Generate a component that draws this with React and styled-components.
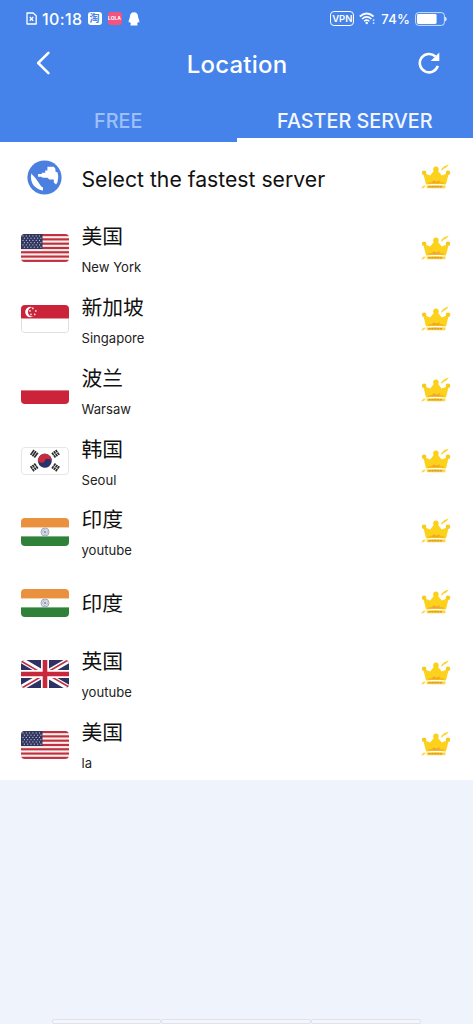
import React from "react";
import styled, { createGlobalStyle } from "styled-components";

const servers = [
  { flag: "us", name: "美国", city: "New York" },
  { flag: "sg", name: "新加坡", city: "Singapore" },
  { flag: "pl", name: "波兰", city: "Warsaw" },
  { flag: "kr", name: "韩国", city: "Seoul" },
  { flag: "in", name: "印度", city: "youtube" },
  { flag: "in", name: "印度" },
  { flag: "gb", name: "英国", city: "youtube" },
  { flag: "us", name: "美国", city: "la" },
];

const UsFlag = () => (
  <>
    <rect width="48" height="28" fill="#f6efec" />
    {[0, 1, 2, 3, 4, 5, 6].map((i) => (
      <rect key={i} y={i * 4.3} width="48" height="2.15" fill="#c0303f" />
    ))}
    <rect width="21.5" height="15" fill="#30365f" />
    {[0, 1, 2, 3, 4, 5].map((r) =>
      [0, 1, 2, 3, 4, 5].map((c) => (
        <circle
          key={`${r}-${c}`}
          cx={2 + c * 3.3 + (r % 2) * 1.4}
          cy={1.9 + r * 2.25}
          r="0.65"
          fill="#b9bccd"
        />
      ))
    )}
  </>
);

const SgFlag = () => (
  <>
    <rect width="48" height="28" fill="#fff" />
    <rect width="48" height="13.5" fill="#cb2339" />
    <circle cx="9.4" cy="7" r="5.2" fill="#fff" />
    <circle cx="11.6" cy="7" r="4.7" fill="#cb2339" />
    {[
      [11.8, 3.4],
      [9, 5.9],
      [14.8, 5.9],
      [10, 9.4],
      [13.7, 9.4],
    ].map(([x, y]) => (
      <circle key={`${x}-${y}`} cx={x} cy={y} r="0.9" fill="#f8dfe2" />
    ))}
    <path d="M.4 13.5V24.6Q.4 27.6 3.4 27.6H44.6Q47.6 27.6 47.6 24.6V13.5" fill="none" stroke="#d5d0d2" strokeWidth="0.8" />
  </>
);

const PlFlag = () => (
  <>
    <rect width="48" height="28" fill="#fff" />
    <rect y="14.4" width="48" height="13.6" fill="#cb2339" />
  </>
);

const Trigram = ({ x, y, angle, broken }) => (
  <g transform={`translate(${x} ${y}) rotate(${angle})`} stroke="#2c2c2e" strokeWidth="1.7">
    <path d="M-3 -2.3H3M-3 0H3M-3 2.3H3" />
    {broken && <path d="M0 -3.2V3.2" stroke="#fff" strokeWidth="0.5" />}
  </g>
);

const KrFlag = () => (
  <>
    <rect width="48" height="28" fill="#fff" />
    <g transform="rotate(8 23.8 13.8)">
      <circle cx="23.8" cy="13.8" r="7" fill="#29346f" />
      <path d="M16.8 13.8a7 7 0 0 1 14 0a3.5 2.4 0 0 0-7 0a3.5 2.4 0 0 1-7 0z" fill="#c92c3d" />
    </g>
    <Trigram x={13.2} y={6.8} angle={-54} />
    <Trigram x={34.6} y={6.8} angle={54} broken />
    <Trigram x={13.2} y={20.4} angle={54} broken />
    <Trigram x={34.6} y={20.4} angle={-54} broken />
    <rect x="0.4" y="0.4" width="47.2" height="27.2" rx="3.6" fill="none" stroke="#dcdcde" strokeWidth="0.8" />
  </>
);

const InFlag = () => (
  <>
    <rect width="48" height="28" fill="#fdfdfb" />
    <rect width="48" height="9.4" fill="#e9913f" />
    <rect y="18.4" width="48" height="9.6" fill="#2f8039" />
    <circle cx="24" cy="14" r="4" fill="#eef0f4" stroke="#999fb3" strokeWidth="0.9" />
    <circle cx="24" cy="14" r="2.4" fill="none" stroke="#a0a6bb" strokeWidth="1.5" strokeDasharray="0.6 0.6" />
    <circle cx="24" cy="14" r="1.1" fill="#7c86a8" />
  </>
);

const GbFlag = () => (
  <>
    <rect width="48" height="28" fill="#2c3264" />
    <path d="M0 0L48 28M48 0L0 28" stroke="#fff" strokeWidth="5.4" />
    <path d="M-1 0.4L23 14.4M49 27.6L25 13.6M48.8 -1L25 13M-0.8 29L23 15" stroke="#c0303f" strokeWidth="1.6" />
    <path d="M24 0V28M0 14H48" stroke="#fff" strokeWidth="8" />
    <path d="M24 0V28M0 14H48" stroke="#c8283b" strokeWidth="4.6" />
  </>
);

const flags = { us: UsFlag, sg: SgFlag, pl: PlFlag, kr: KrFlag, in: InFlag, gb: GbFlag };

const Crown = () => (
  <svg width="32" height="28" viewBox="0 0 32 28">
    <path
      d="M6.8 19.4L4.6 10.4L10.6 12.6L15.9 6L21.3 12.6L27.4 10.4L25.2 19.4Q16 18 6.8 19.4Z"
      fill="#fcd21c"
      stroke="#fcd21c"
      strokeWidth="2"
      strokeLinejoin="round"
    />
    <circle cx="15.9" cy="5.2" r="2.7" fill="#fbd019" />
    <circle cx="4.1" cy="8.8" r="2.3" fill="#f8ca20" />
    <circle cx="28" cy="8.8" r="2.3" fill="#f8ca20" />
    <path d="M8 18.6Q16 16.4 24.4 18.6L23.8 20H8.2Z" fill="#f6bb1c" />
    <path d="M11 18.8L14 16.2L16.4 18L20 16L18.8 19Z" fill="#f4a32c" />
    <path d="M6.6 21.4Q16 20.6 25.6 21.6L25.2 24.2H6.8Z" fill="#fbd545" />
    <path d="M8.4 22.7H22" stroke="#dc9c24" strokeWidth="1.6" strokeDasharray="2.4 0.5" />
    <path d="M1 24.4L3.2 21.8L6 21.4L4 24Z" fill="#fbd94b" />
    <path d="M21.3 5L24.6 1.9L28.8 0.5L26.6 3.2L23.4 4.9L21.6 7Z" fill="#fbd42c" />
  </svg>
);

const Globe = () => (
  <svg width="35" height="35" viewBox="0 0 35 35">
    <circle cx="17.5" cy="17.5" r="17.1" fill="#4b7fe0" />
    <path
      d="M4.2 13.4L8.4 18L11.2 22L14.2 26.4L16 27.6V30.4Q10.4 29.8 6.5 25.2Q3 20 4.2 13.4Z"
      fill="#fff"
    />
    <path
      d="M20.4 6.8H26.8L28.4 8.8V11.4L30.6 12.6Q32.2 17.4 30.4 22.6L29 24.6L26.8 22.6V19.4H22.4L20.4 17.8H15.8L14.2 16.8H11V14H14.8V12.8H18.2V10.4H20.4Z"
      fill="#fff"
    />
  </svg>
);

const App = () => (
  <Screen>
    <GlobalStyle />
    <Header>
      <StatusBar>
        <StatusGroup>
          <svg width="11" height="13" viewBox="0 0 11 13" fill="none" stroke="#fff">
            <path d="M1 1H7.2L10.2 3.8V12H1Z" strokeWidth="1.3" strokeLinejoin="round" />
            <path d="M3.8 5L7.2 8.8M7.2 5L3.8 8.8" strokeWidth="1.3" />
          </svg>
          <Clock>10:18</Clock>
          <AppBadge>淘</AppBadge>
          <AppBadge $pink>LOLA</AppBadge>
          <svg width="12" height="14" viewBox="0 0 12 14">
            <path
              d="M6 .3C3.4 .3 2 2 2 4.3C2 6 .6 7.8 .6 9.7C.6 10.8 1.3 10.5 1.9 9.8C2 10.8 2.5 11.5 3.1 12C2 12.4 2.1 13.6 3.4 13.6H8.6C9.9 13.6 10 12.4 8.9 12C9.5 11.5 10 10.8 10.1 9.8C10.7 10.5 11.4 10.8 11.4 9.7C11.4 7.8 10 6 10 4.3C10 2 8.6 .3 6 .3Z"
              fill="#fff"
            />
          </svg>
        </StatusGroup>
        <StatusGroup>
          <Vpn>VPN</Vpn>
          <Wifi width="17" height="13" viewBox="0 0 17 13" fill="none" stroke="#fff">
            <path d="M.8 4.5Q7.7-1.5 14.6 4.5" strokeWidth="1.7" />
            <path d="M3 7Q7.7 2.8 12.4 7" strokeWidth="1.6" />
            <path d="M5.1 9.2Q7.7 7 10.3 9.2" strokeWidth="1.5" />
            <circle cx="7.7" cy="11" r="1.2" fill="#fff" stroke="none" />
            <path d="M14.6 7.2V9M14.6 10.2V12" strokeWidth="1.5" opacity=".75" />
          </Wifi>
          <Percent>74%</Percent>
          <svg width="32" height="14" viewBox="0 0 32 14">
            <rect x=".6" y=".6" width="28.8" height="12.8" rx="3" fill="none" stroke="#fff" strokeOpacity=".75" />
            <rect x="2" y="2" width="19.6" height="10" rx="1.4" fill="#fff" />
            <path d="M30.2 4.8Q31.6 5 31.6 7T30.2 9.2Z" fill="#fff" />
          </svg>
        </StatusGroup>
      </StatusBar>
      <TitleBar>
        <IconButton aria-label="Back">
          <svg width="14" height="24" viewBox="0 0 14 24" fill="none">
            <path d="M12.4 1.8L2.2 12L12.4 22.2" stroke="#fff" strokeWidth="2.5" strokeLinecap="round" strokeLinejoin="round" />
          </svg>
        </IconButton>
        <Title>Location</Title>
        <IconButton aria-label="Refresh">
          <svg width="22" height="22" viewBox="0 0 22 22">
            <path d="M19.8 13.9A9.2 9.2 0 1 1 17.4 4.5" fill="none" stroke="#fff" strokeWidth="2.6" />
            <path d="M21.3 .6V9.1H12.7Z" fill="#fff" />
          </svg>
        </IconButton>
      </TitleBar>
      <Tabs>
        <Tab>FREE</Tab>
        <Tab $active>FASTER SERVER</Tab>
      </Tabs>
    </Header>
    <List>
      <Row>
        <Leading>
          <Globe />
        </Leading>
        <Fastest>Select the fastest server</Fastest>
        <Crown />
      </Row>
      {servers.map(({ flag, name, city }, i) => {
        const Flag = flags[flag];
        return (
          <Row key={i}>
            <Leading>
              <FlagBox viewBox="0 0 48 28" preserveAspectRatio="none">
                <Flag />
              </FlagBox>
            </Leading>
            <Labels $single={!city}>
              <Country>{name}</Country>
              {city && <City>{city}</City>}
            </Labels>
            <Crown />
          </Row>
        );
      })}
    </List>
    <Banner>
      <BannerCell />
      <BannerCell />
      <BannerCell />
    </Banner>
  </Screen>
);

const GlobalStyle = createGlobalStyle`
  * {
    box-sizing: border-box;
  }
  body {
    margin: 0;
    background: #eff3fc;
    font-family: Inter, "Noto Sans CJK SC", sans-serif;
  }
`;

const Screen = styled.div`
  display: flex;
  flex-direction: column;
  height: 1024px;
  overflow: hidden;
  background: #eff3fc;
`;

const Header = styled.header`
  height: 142px;
  flex-shrink: 0;
  background: #4583eb;
  color: #fff;
`;

const StatusBar = styled.div`
  display: flex;
  justify-content: space-between;
  height: 37px;
  padding: 0 26px;
`;

const StatusGroup = styled.div`
  display: flex;
  align-items: center;
`;

const Clock = styled.span`
  margin: 0 5px 0 5px;
  font-size: 16px;
  font-weight: 500;
  letter-spacing: 0.4px;
`;

const AppBadge = styled.span`
  display: flex;
  align-items: center;
  justify-content: center;
  width: 14px;
  height: 13px;
  margin-right: 6px;
  border-radius: 3px;
  background: ${(p) => (p.$pink ? "#f3547f" : "#fff")};
  color: ${(p) => (p.$pink ? "#fff" : "#4583eb")};
  font-size: ${(p) => (p.$pink ? "5px" : "10px")};
  font-weight: 700;
  line-height: 13px;
`;

const Vpn = styled.span`
  display: flex;
  align-items: center;
  justify-content: center;
  width: 24px;
  height: 15px;
  border: 1px solid #fff;
  border-radius: 4px;
  font-size: 9.5px;
  font-weight: 600;
`;

const Wifi = styled.svg`
  margin-left: 5px;
`;

const Percent = styled.span`
  margin: 0 5px 0 5px;
  font-size: 13px;
  font-weight: 500;
  letter-spacing: 0.2px;
`;

const TitleBar = styled.div`
  display: flex;
  align-items: center;
  justify-content: space-between;
  height: 52px;
  padding: 0 33px 0 36px;
`;

const IconButton = styled.button`
  display: flex;
  padding: 0;
  border: 0;
  background: none;
`;

const Title = styled.h1`
  margin: 3px 0 0 6px;
  font-size: 24px;
  font-weight: 500;
  letter-spacing: 0.2px;
`;

const Tabs = styled.div`
  display: grid;
  grid-template-columns: 1fr 1fr;
  height: 53px;
`;

const Tab = styled.div`
  display: flex;
  align-items: center;
  justify-content: center;
  padding-top: 14px;
  border-bottom: 4px solid ${(p) => (p.$active ? "#fff" : "transparent")};
  color: ${(p) => (p.$active ? "#f3f7ff" : "#9ec0f8")};
  font-size: 19.8px;
  font-weight: 500;
`;

const List = styled.div`
  background: #fff;
`;

const Row = styled.div`
  display: flex;
  align-items: center;
  height: 70.9px;
  padding: 0 21px 0 20.5px;

  > svg:last-child {
    margin-top: 1px;
  }
`;

const Leading = styled.div`
  display: flex;
  justify-content: center;
  width: 48px;
  margin-right: 13px;
`;

const FlagBox = styled.svg`
  width: 48px;
  height: 28px;
  border-radius: 4px;
`;

const Fastest = styled.div`
  flex: 1;
  padding-top: 3px;
  color: #111;
  font-size: 21.2px;
`;

const Labels = styled.div`
  flex: 1;
  padding-top: ${(p) => (p.$single ? "3px" : "1px")};
`;

const Country = styled.div`
  color: #111;
  font-size: 20.8px;
  line-height: 30px;
`;

const City = styled.div`
  margin-top: 6px;
  color: #222;
  font-size: 13.1px;
  line-height: 18px;
`;

const Banner = styled.div`
  display: grid;
  grid-template-columns: 109px 150px 110px;
  height: 5px;
  margin: auto 0 0 52px;
`;

const BannerCell = styled.div`
  border: 1px solid #dfe3e9;
  border-radius: 2px;
  background: #f3f6fc;
`;

export default App;
